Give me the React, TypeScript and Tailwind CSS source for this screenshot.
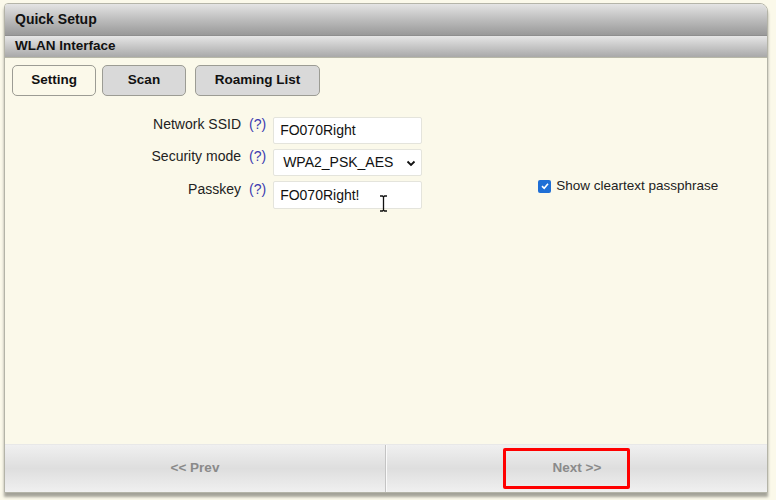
import React from "react";

function Help() {
  return <span className="text-[#3b3bb0] text-[14px] ml-[8px] mr-[7px] mt-[-12px]">(?)</span>;
}

export default function App() {
  return (
    <div className="w-[776px] h-[500px] bg-[#fbf9ea] relative overflow-hidden" style={{ fontFamily: '"Liberation Sans", Arial, sans-serif' }}>
      <div className="absolute left-[4px] top-[3px] w-[764px] h-[490px] rounded-tr-[8px] rounded-tl-[4px] border border-[#b4b4a8] flex flex-col overflow-hidden shadow-[0_4px_3px_rgba(0,0,0,0.35)] bg-[#fbf9ea]">
        <div className="h-[32px] shrink-0 flex items-center pl-[10px] text-[14px] font-bold text-[#111] bg-gradient-to-b from-[#e4e4e4] via-[#bdbdbd] to-[#999999] border-b border-[#8e8e8e]">
          Quick Setup
        </div>
        <div className="h-[22px] shrink-0 flex items-center pl-[10px] text-[13.5px] font-bold text-[#111] bg-gradient-to-b from-[#e6e6e6] to-[#a9a9a9] border-b border-[#b8b8a8]">
          WLAN Interface
        </div>
        <div className="flex-1 relative">
          <div className="flex gap-[6px] pl-[7px] pt-[7px]">
            <div className="w-[84px] h-[31px] rounded-[5px] border border-[#9c9c94] bg-[#fbf9ea] flex items-center justify-center text-[13.5px] font-bold text-[#111]">Setting</div>
            <div className="w-[84px] h-[31px] rounded-[5px] border border-[#9c9c94] bg-[#d9d9d9] flex items-center justify-center text-[13.5px] font-bold text-[#111]">Scan</div>
            <div className="ml-[3px] w-[125px] h-[31px] rounded-[5px] border border-[#9c9c94] bg-[#d9d9d9] flex items-center justify-center text-[13.5px] font-bold text-[#111]">Roaming List</div>
          </div>
          <div className="mt-[21px] flex flex-col gap-[5px] text-[14px] text-[#222]">
            <div className="flex items-center">
              <div className="w-[236px] text-right mt-[-12px]">Network SSID</div>
              <Help />
              <div className="w-[149px] h-[27px] bg-white border border-[#e4e4dc] rounded-[2px] flex items-center pl-[6px] text-[14px] text-[#111]">FO070Right</div>
            </div>
            <div className="flex items-center">
              <div className="w-[236px] text-right mt-[-12px]">Security mode</div>
              <Help />
              <div className="w-[149px] h-[27px] bg-white border border-[#e4e4dc] rounded-[2px] flex items-center justify-between pl-[9px] pr-[5px] text-[14px] text-[#111]">
                <span>WPA2_PSK_AES</span>
                <svg width="10" height="10" viewBox="0 0 10 10"><path d="M1.5 3.5 L5 7 L8.5 3.5" fill="none" stroke="#111" strokeWidth="1.8" /></svg>
              </div>
            </div>
            <div className="flex items-center">
              <div className="w-[236px] text-right mt-[-12px]">Passkey</div>
              <Help />
              <div className="w-[149px] h-[28px] bg-white border border-[#e4e4dc] rounded-[2px] flex items-center pl-[6px] text-[14px] text-[#111]">FO070Right!</div>
              <div className="ml-[116px] mt-[-18px] flex items-center gap-[5px]">
                <div className="w-[13px] h-[13px] rounded-[2px] bg-[#1f6fd6] flex items-center justify-center">
                  <svg width="10" height="10" viewBox="0 0 10 10"><path d="M2 5.2 L4.2 7.3 L8 2.8" fill="none" stroke="#fff" strokeWidth="1.6" /></svg>
                </div>
                <span className="text-[13.5px] text-[#222]">Show cleartext passphrase</span>
              </div>
            </div>
          </div>
          <svg className="absolute left-[374px] top-[137px]" width="9" height="17" viewBox="0 0 9 17">
            <path d="M1 1 H3.5 L4.5 2 L5.5 1 H8 M4.5 2 V15 M1 16 H3.5 L4.5 15 L5.5 16 H8" fill="none" stroke="#111" strokeWidth="1.3" />
          </svg>
        </div>
        <div className="h-[48px] shrink-0 flex bg-gradient-to-b from-[#f0f0f0] via-[#dedede] to-[#f0f0f0] border-t border-[#e8e8e8]">
          <div className="w-[381px] flex items-center justify-center text-[13.5px] font-bold text-[#8a8a8a] border-r border-[#c4c4c4]">&lt;&lt; Prev</div>
          <div className="w-px bg-[#fafafa]" />
          <div className="flex-1 relative flex items-center justify-center text-[13.5px] font-bold text-[#8a8a8a]">
            Next &gt;&gt;
            <div className="absolute left-[116px] top-[3px] w-[127px] h-[41px] border-[3px] border-[#ff0000] rounded-[2px]" />
          </div>
        </div>
      </div>
    </div>
  );
}
